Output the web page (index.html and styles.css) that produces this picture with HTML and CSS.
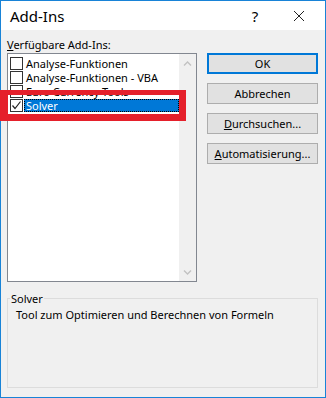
FILE: index.html
```html
<!DOCTYPE html>
<html lang="de">
  <head>
    <meta charset="UTF-8" />
    <meta name="viewport" content="width=device-width, initial-scale=1.0" />
    <title>Add-Ins</title>
    <link rel="stylesheet" href="styles.css">
  </head>
  <body>
    <div class="dialog">
      <div class="titlebar">
        <span class="title">Add-Ins</span>
        <span class="help">?</span>
        <span class="close">
          <svg width="12" height="12" viewBox="0 0 12 12">
            <path d="M1 1 L11 11 M11 1 L1 11" stroke="#222" stroke-width="1" fill="none" />
          </svg>
        </span>
      </div>

      <div class="content">
        <div class="main">
          <div class="left">
            <div class="label"><u>V</u>erfügbare Add-Ins:</div>
            <div class="listbox">
              <ul class="items">
                <li class="item"><span class="check"></span><span class="name">Analyse-Funktionen</span></li>
                <li class="item"><span class="check"></span><span class="name">Analyse-Funktionen - VBA</span></li>
                <li class="item"><span class="check"></span><span class="name">Euro Currency Tools</span></li>
                <li class="item selected">
                  <span class="check">
                    <svg width="11" height="11" viewBox="0 0 11 11">
                      <path d="M1.5 5.5 L4 8.5 L9.5 1.5" stroke="#222" stroke-width="1.2" fill="none" />
                    </svg>
                  </span>
                  <span class="name">Solver</span>
                </li>
              </ul>
              <div class="scrollbar">
                <svg width="17" height="12" viewBox="0 0 17 12">
                  <path d="M5 7.5 L8.5 4 L12 7.5" stroke="#c2c2c2" stroke-width="1.4" fill="none" />
                </svg>
                <svg width="17" height="12" viewBox="0 0 17 12">
                  <path d="M5 4.5 L8.5 8 L12 4.5" stroke="#c2c2c2" stroke-width="1.4" fill="none" />
                </svg>
              </div>
            </div>
          </div>

          <div class="buttons">
            <button class="btn default">OK</button>
            <button class="btn">Abbrechen</button>
            <button class="btn"><u>D</u>urchsuchen...</button>
            <button class="btn"><u>A</u>utomatisierung...</button>
          </div>
        </div>

        <fieldset class="group">
          <legend>Solver</legend>
          <p class="desc">Tool zum Optimieren und Berechnen von Formeln</p>
        </fieldset>
      </div>

      <!-- rote Markierung -->
      <div class="marker"></div>
    </div>
  </body>
</html>
```

FILE: styles.css
```css
/* reset */
body,
ul,
li,
p {
  margin: 0;
  padding: 0;
}

li {
  list-style-type: none;
}

body {
  font-family: "Noto Sans", "Open Sans", sans-serif;
  font-size: 11px;
  color: #000;
  background-color: #fff;
}

.dialog {
  position: relative;
  width: 326px;
  height: 398px;
  box-sizing: border-box;
  border: 1px solid #1883d7;
  background-color: #f0f0f0;
  display: flex;
  flex-direction: column;
}

.titlebar {
  height: 29px;
  background-color: #fff;
  display: flex;
  align-items: center;
  padding-left: 9px;
}

.title {
  flex: 1;
  font-size: 15px;
}

.help {
  width: 20px;
  text-align: center;
  font-size: 15px;
  margin-right: 28px;
}

.close {
  width: 32px;
  display: flex;
  align-items: center;
}

.content {
  flex: 1;
  padding: 7px 7px 9px 6px;
  display: flex;
  flex-direction: column;
}

.main {
  display: flex;
  gap: 10px;
}

.left {
  width: 190px;
}

.label {
  height: 15px;
  line-height: 15px;
  margin-bottom: 1px;
}

.listbox {
  height: 229px;
  box-sizing: border-box;
  border: 1px solid #828790;
  background-color: #fff;
  display: flex;
}

.items {
  flex: 1;
  padding-top: 2px;
}

.item {
  height: 14px;
  display: flex;
  align-items: center;
  padding-left: 2px;
}

.check {
  width: 13px;
  height: 13px;
  box-sizing: border-box;
  border: 1px solid #333;
  background-color: #fff;
  display: flex;
  align-items: center;
  justify-content: center;
  margin-right: 1px;
}

.name {
  line-height: 13px;
  padding: 0 2px;
  white-space: nowrap;
}

.item.selected .name {
  flex: 1;
  background-color: #0078d7;
  color: #fff;
  outline: 1px dotted #000;
  outline-offset: -1px;
}

.scrollbar {
  width: 17px;
  background-color: #f0f0f0;
  display: flex;
  flex-direction: column;
  justify-content: space-between;
  padding: 4px 0 3px;
}

.buttons {
  flex: 1;
  padding-top: 16px;
  display: flex;
  flex-direction: column;
  gap: 9px;
}

.btn {
  height: 21px;
  font-family: inherit;
  font-size: 11px;
  background-color: #e1e1e1;
  border: 1px solid #adadad;
  padding: 0;
  color: #000;
}

.btn.default {
  border: 2px solid #0078d7;
}

.group {
  margin: 9px 0 0 0;
  padding: 0 8px;
  flex: 1;
  border: 1px solid #dcdcdc;
  border-radius: 0;
}

.group legend {
  padding: 0 1px;
  margin-left: -6px;
  line-height: 15px;
}

.desc {
  margin-top: 1px;
  line-height: 15px;
}

.marker {
  position: absolute;
  left: -1px;
  top: 89px;
  width: 186px;
  height: 31px;
  box-sizing: border-box;
  border-style: solid;
  border-color: #e5202b;
  border-width: 5px 7px 7px 8px;
}
```
